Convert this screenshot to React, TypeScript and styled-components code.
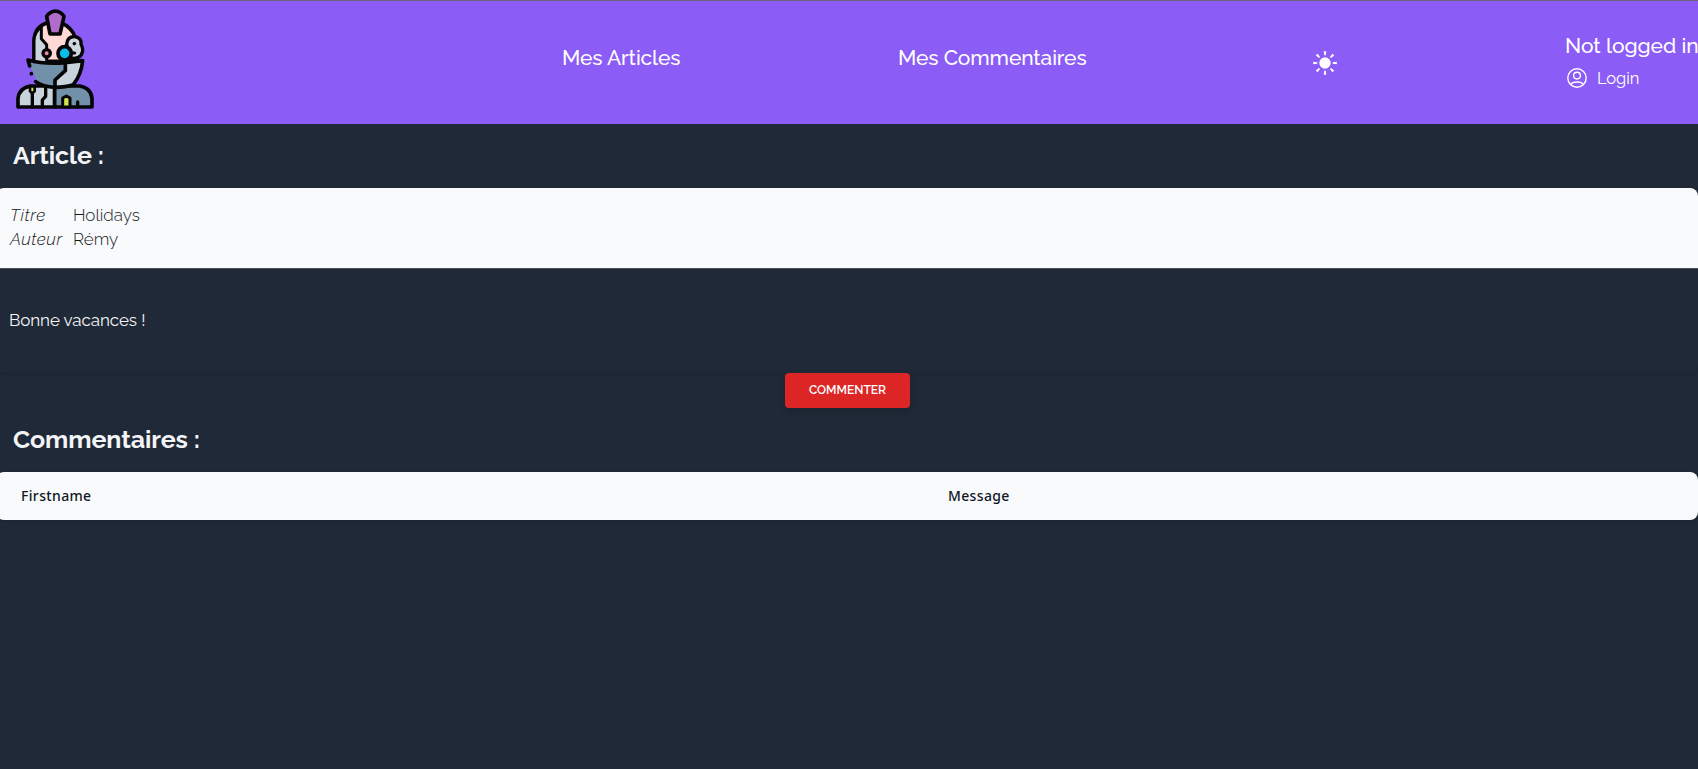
import React from 'react';
import styled, { createGlobalStyle } from 'styled-components';

const GlobalStyle = createGlobalStyle`
  * { box-sizing: border-box; }
  body {
    margin: 0;
    min-height: 100vh;
    overflow: hidden;
    background: #1f2937;
    color: #f3f4f6;
    font-family: Raleway, Lato, sans-serif;
  }
  h2, p, dl, dd { margin: 0; }
`;

const Header = styled.header`
  display: flex;
  align-items: flex-start;
  height: 124px;
  padding-left: 15px;
  border-top: 1px solid #6b6478;
  background: #8b5cf6;
  color: #fff;

  > * { flex-shrink: 0; }
`;

const Logo = styled.svg`
  width: 80px;
  height: 102px;
  margin-top: 7px;
`;

const NavLink = styled.a<{ $offset: number; $width: number }>`
  margin: 43px 0 0 ${p => p.$offset}px;
  width: ${p => p.$width}px;
  white-space: nowrap;
  font-size: 21px;
  font-weight: 500;
  line-height: 28px;
  letter-spacing: -0.12px;
`;

const SunIcon = styled.svg`
  width: 26px;
  height: 26px;
  margin: 49px 0 0 225px;
`;

const Account = styled.div`
  margin: 31px 0 0 227px;
  white-space: nowrap;
`;

const Status = styled.div`
  font-size: 21px;
  font-weight: 500;
  line-height: 28px;
  letter-spacing: -0.04px;
`;

const Login = styled.a`
  display: flex;
  align-items: center;
  gap: 10px;
  margin-top: 6px;
  padding-left: 2px;
  font-size: 16.5px;
  line-height: 24px;
  letter-spacing: -0.1px;
`;

const Heading = styled.h2`
  padding: 15px 13px 17px;
  font-size: 25px;
  font-weight: 700;
  line-height: 32px;
  letter-spacing: -0.1px;
`;

const Card = styled.section`
  margin-left: -4px;
  border-radius: 8px;
  overflow: hidden;
  box-shadow: 0 1px 3px rgba(0, 0, 0, 0.14);
`;

const Details = styled.dl`
  display: grid;
  grid-template-columns: 63px 1fr;
  height: 81px;
  align-content: start;
  padding: 15px 14px 0;
  border-bottom: 1px solid #4b5058;
  background: #f9fafb;
  color: #15181d;
  font-size: 17px;
  font-weight: 300;
  line-height: 24px;
`;

const Term = styled.dt<{ $spacing: number }>`
  font-style: italic;
  letter-spacing: ${p => p.$spacing}px;
`;

const Content = styled.p`
  height: 104px;
  padding: 39px 13px 0;
  font-size: 17px;
  line-height: 24px;
  letter-spacing: -0.09px;
`;

const CommentButton = styled.button`
  display: block;
  width: 125px;
  height: 35px;
  margin: 0 0 0 785px;
  padding: 0 0 2px;
  border: 0;
  border-radius: 4px;
  background: #dc2626;
  color: #fff;
  box-shadow: 0 3px 7px rgba(0, 0, 0, 0.16);
  font: 600 12px/20px Raleway, Lato, sans-serif;
`;

const TableHead = styled.div`
  display: grid;
  grid-template-columns: 927px 1fr;
  height: 48px;
  padding: 14px 25px 0;
  background: #f9fafb;
  color: #111827;
  font: 500 14px/20px 'Noto Sans', sans-serif;
  letter-spacing: 0.35px;
`;

const Robot = () => (
  <Logo viewBox="45 24 240 306" stroke="#050505" strokeWidth="11" strokeLinejoin="round" strokeLinecap="round">
    <path d="M102 184V122Q104 78 144 68H182Q214 80 226 112L232 184Z" fill="#ffd9d5" />
    <path d="M102 184V122Q103 90 122 80V116L138 136V184Z" fill="#cdd5dd" stroke="none" />
    <path d="M102 184V122Q103 94 124 80V116L140 134V184" fill="none" strokeWidth="9" />
    <path d="M200 133Q202 109 224 110Q246 113 243 133Q253 148 243 166Q234 178 211 174Z" fill="#cdd5dd" strokeWidth="10" />
    <circle cx="223" cy="131" r="4" fill="#050505" strokeWidth="3" />
    <path d="M215 159H224" strokeWidth="9" />
    <circle cx="140" cy="160" r="11" fill="#e98aa6" strokeWidth="10" />
    <circle cx="194" cy="160" r="20" fill="#08bde8" />
    <path d="M140 49Q150 34 166 33Q182 34 192 49L180 102H150Z" fill="#b16cca" />
    <path d="M54 321V295Q57 265 91 258H164V321Z" fill="#c8d3dc" />
    <path d="M164 258H239Q273 264 276 295V321H164Z" fill="#7190a9" />
    <path d="M87 182Q135 194 196 188V212L165 240V261Q134 260 113 250L95 208Z" fill="#7190a9" stroke="none" />
    <path d="M196 188L248 182Q244 224 220 254Q198 261 165 262V240L196 212Z" fill="#c8d3dc" />
    <path d="M89 198L84 180Q135 194 196 188M107 245Q128 261 165 262" fill="none" />
    <circle cx="94" cy="221" r="5.5" fill="#050505" stroke="none" />
    <path d="M90 264V274L97 280L104 274V264" fill="#d2e24f" strokeWidth="8" />
    <path d="M97 280V321M137 263V289L127 300V321" fill="none" strokeWidth="10" />
    <path d="M188 321V294L199 288L210 294V321Z" fill="#d2e24f" strokeWidth="9" />
    <path d="M233 321V306" strokeWidth="10" />
  </Logo>
);

const Sun = () => (
  <SunIcon viewBox="0 0 26 26" fill="#fff">
    <circle cx="13" cy="13" r="5.7" />
    {[0, 45, 90, 135, 180, 225, 270, 315].map(angle => (
      <path key={angle} d="M11.7 1.2h2.6l-.5 4.1h-1.6z" transform={`rotate(${angle} 13 13)`} />
    ))}
  </SunIcon>
);

const UserIcon = () => (
  <svg width="20" height="20" viewBox="0 0 20 20" fill="none" stroke="#fff" strokeWidth="1.4">
    <circle cx="10" cy="10" r="9.2" />
    <circle cx="10" cy="7.6" r="3.4" />
    <path d="M3.8 16.6C5.2 13.1 14.8 13.1 16.2 16.6" />
  </svg>
);

export default function App() {
  return (
    <>
      <GlobalStyle />
      <Header>
        <Robot />
        <NavLink $offset={467} $width={121}>Mes Articles</NavLink>
        <NavLink $offset={215} $width={189}>Mes Commentaires</NavLink>
        <Sun />
        <Account>
          <Status>Not logged in</Status>
          <Login><UserIcon />Login</Login>
        </Account>
      </Header>
      <main>
        <Heading>Article :</Heading>
        <Card>
          <Details>
            <Term $spacing={0.65}>Titre</Term>
            <dd>Holidays</dd>
            <Term $spacing={0.5}>Auteur</Term>
            <dd>Rémy</dd>
          </Details>
          <Content>Bonne vacances !</Content>
        </Card>
        <CommentButton>COMMENTER</CommentButton>
        <Heading>Commentaires :</Heading>
        <Card>
          <TableHead>
            <span>Firstname</span>
            <span>Message</span>
          </TableHead>
        </Card>
      </main>
    </>
  );
}
